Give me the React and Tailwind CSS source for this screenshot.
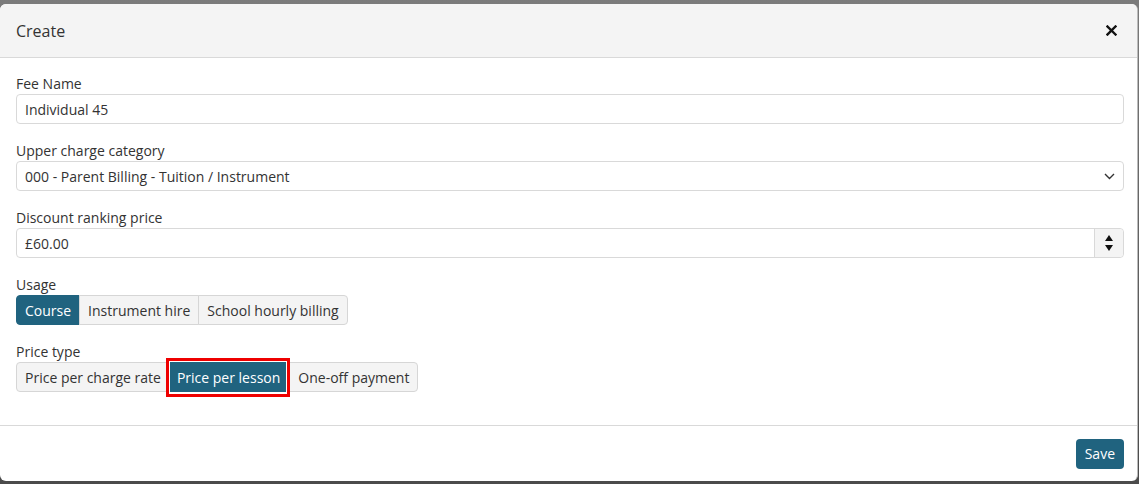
import { useState } from "react";

const font = { fontFamily: '"Open Sans", "Liberation Sans", sans-serif' };

// Segmented button group used for Usage / Price type
function ButtonGroup({ options, value, highlight }) {
    return (
        <div className="flex">
            {options.map((opt, i) => {
                const active = opt === value;
                const ringed = active && highlight;
                return (
                    <div
                        key={opt}
                        className={`relative h-[30px] flex items-center text-[14px] ${
                            ringed ? "pl-[11px] pr-[10px] -ml-[4px] z-10" : "px-2 border"
                        } ${
                            active
                                ? "bg-[#20637f] border-[#20637f] text-white"
                                : "bg-[#f4f4f4] border-[#d6d6d6] text-[#333]"
                        } ${i === 0 ? "rounded-l-[4px]" : ringed ? "" : "-ml-px"} ${
                            i === options.length - 1 ? "rounded-r-[4px]" : ""
                        }`}
                    >
                        {opt}
                        {ringed && (
                            <span className="absolute -top-[4px] -bottom-[5px] left-0 right-0 border-[3px] border-[#ee0000] shadow-[inset_0_0_0_1px_#fff]" />
                        )}
                    </div>
                );
            })}
        </div>
    );
}

function Field({ label, children }) {
    return (
        <div className="mb-[17px]">
            <div className="text-[14px] leading-5 text-[#333]">{label}</div>
            {children}
        </div>
    );
}

export default function App() {
    const [usage] = useState("Course");
    const [priceType] = useState("Price per lesson");

    return (
        <div
            className="w-[1139px] h-[484px] bg-gradient-to-b from-[#7b7b7b] to-[#4b4b4b] pt-[4px] overflow-hidden"
            style={font}
        >
            <div className="w-[1138px] h-[477px] bg-white rounded-[6px] border-r border-[#bbb] flex flex-col overflow-hidden">
                {/* Header */}
                <div className="h-[54px] bg-[#f4f4f4] border-b border-[#d9d9d9] flex items-center justify-between pl-4 pr-[20px] shrink-0">
                    <span className="text-[16px] text-[#333]">Create</span>
                    <svg width="11" height="11" viewBox="0 0 11 11">
                        <path d="M1.5 1.5 L9.5 9.5 M9.5 1.5 L1.5 9.5" stroke="#111" strokeWidth="2.4" strokeLinecap="square" />
                    </svg>
                </div>

                {/* Body */}
                <div className="pl-4 pr-[13px] pt-4 pb-4 border-b border-[#d9d9d9]">
                    <Field label="Fee Name">
                        <div className="h-[30px] border border-[#d9d9d9] rounded-[4px] px-2 flex items-center text-[14px] text-[#333]">
                            Individual 45
                        </div>
                    </Field>
                    <Field label="Upper charge category">
                        <div className="h-[30px] border border-[#d9d9d9] rounded-[4px] pl-2 pr-[8px] flex items-center justify-between text-[14px] text-[#333]">
                            <span>000 - Parent Billing - Tuition / Instrument</span>
                            <svg width="11" height="7" viewBox="0 0 11 7">
                                <path d="M1 1 L5.5 5.5 L10 1" fill="none" stroke="#333" strokeWidth="1.4" />
                            </svg>
                        </div>
                    </Field>
                    <Field label="Discount ranking price">
                        <div className="h-[30px] border border-[#d9d9d9] rounded-[4px] flex items-stretch text-[14px] text-[#333]">
                            <span className="flex-1 pl-2 flex items-center">£60.00</span>
                            <div className="w-[29px] bg-[#f4f4f4] border-l border-[#d9d9d9] rounded-r-[4px] flex flex-col items-center justify-center gap-[4px]">
                                <svg width="8" height="6" viewBox="0 0 8 6">
                                    <path d="M0 6 L4 0 L8 6 Z" fill="#111" />
                                </svg>
                                <svg width="8" height="6" viewBox="0 0 8 6">
                                    <path d="M0 0 L8 0 L4 6 Z" fill="#111" />
                                </svg>
                            </div>
                        </div>
                    </Field>
                    <Field label="Usage">
                        <ButtonGroup
                            options={["Course", "Instrument hire", "School hourly billing"]}
                            value={usage}
                        />
                    </Field>
                    <Field label="Price type">
                        <ButtonGroup
                            options={["Price per charge rate", "Price per lesson", "One-off payment"]}
                            value={priceType}
                            highlight
                        />
                    </Field>
                </div>

                {/* Footer */}
                <div className="flex-1 flex items-center justify-end pr-[13px]">
                    <button className="h-[30px] px-[9px] rounded-[4px] bg-[#20637f] text-white text-[14px]">
                        Save
                    </button>
                </div>
            </div>
        </div>
    );
}
